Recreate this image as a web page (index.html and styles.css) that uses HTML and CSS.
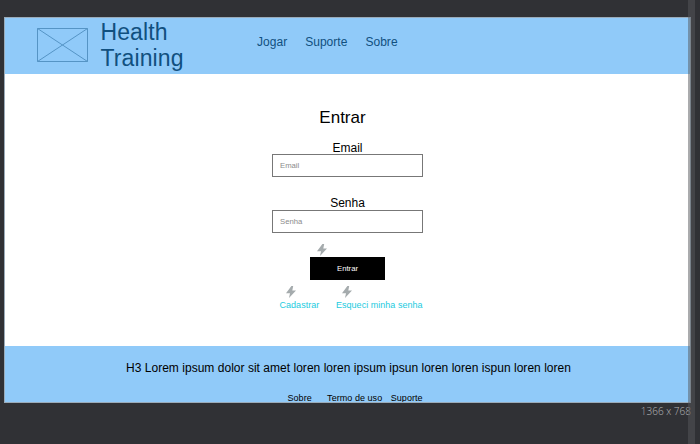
FILE: index.html
```
<!DOCTYPE html>
<html lang="pt">
<head>
<meta charset="utf-8">
<title>Health Training</title>
<link rel="stylesheet" href="styles.css">
</head>
<body>
<div class="artboard">
  <header class="header">
    <svg class="logo" viewBox="0 0 51 34" width="51" height="34"><path d="M.5 .5h50v33h-50zM.5 .5l50 33M50.500 .5l-50 33"/></svg>
    <h1 class="brand">Health<br>Training</h1>
    <nav class="nav"><a>Jogar</a><a>Suporte</a><a>Sobre</a></nav>
  </header>
  <main class="main">
    <h2 class="title">Entrar</h2>
    <form class="form">
      <label class="label">Email</label>
      <div class="field">Email</div>
      <label class="label second">Senha</label>
      <div class="field">Senha</div>
      <div class="action">
        <svg class="bolt" viewBox="0 0 10 12" width="10" height="12"><path d="M5.400 0L0 7.200H4L3 12L10 4.400H6.300L7.200 0z"/></svg>
        <div class="button">Entrar</div>
      </div>
      <div class="links">
        <div class="link"><svg class="bolt" viewBox="0 0 10 12" width="10" height="12"><path d="M5.400 0L0 7.200H4L3 12L10 4.400H6.300L7.200 0z"/></svg><a>Cadastrar</a></div>
        <div class="link"><svg class="bolt" viewBox="0 0 10 12" width="10" height="12"><path d="M5.400 0L0 7.200H4L3 12L10 4.400H6.300L7.200 0z"/></svg><a>Esqueci minha senha</a></div>
      </div>
    </form>
  </main>
  <footer class="footer">
    <h3 class="tagline">H3 Lorem ipsum dolor sit amet loren loren ipsum ipsun loren loren ispun loren loren</h3>
    <nav class="footer-nav"><a>Sobre</a><a>Termo de uso</a><a>Suporte</a></nav>
  </footer>
</div>
<div class="size">1366 x 768</div>
<div class="scrollbar"></div>
</body>
</html>
```
FILE: styles.css
```
* { box-sizing: border-box; }
body {
  margin: 0;
  width: 700px;
  height: 444px;
  padding: 17px 0 0 4px;
  overflow: hidden;
  background: #303135;
  font-family: "Liberation Sans", Arial, sans-serif;
  color: #000;
}
h1, h2, h3 { margin: 0; font-weight: 400; }
svg { display: block; flex: none; }
.artboard {
  width: 687px;
  height: 386px;
  display: flex;
  flex-direction: column;
  background: #fff;
  border: 1px solid #9aabb9;
  overflow: hidden;
}
.header {
  height: 56px;
  flex: none;
  display: flex;
  align-items: flex-start;
  padding-left: 32px;
  background: #90caf9;
  color: #11507f;
}
.logo { margin-top: 10px; fill: none; stroke: #5594c5; stroke-width: 1; }
.brand { width: 156px; margin: 1px 0 0 12.500px; font-size: 23px; line-height: 26px; letter-spacing: .1px; }
.nav { display: flex; gap: 18px; margin: 17px 0 0 .5px; font-size: 12px; line-height: 14px; letter-spacing: .03px; }
.main { height: 272px; flex: none; display: flex; flex-direction: column; padding: 34px 0 0 267px; }
.title { width: 151px; padding-right: 10px; text-align: center; font-size: 17px; line-height: 20px; }
.form { width: 151px; margin-top: 13px; display: flex; flex-direction: column; }
.label { height: 13px; font-size: 12px; line-height: 14px; text-align: center; }
.second { height: 14px; margin-top: 19px; }
.field {
  height: 23px;
  border: 1px solid #777;
  padding-left: 7px;
  font-size: 7.7px;
  line-height: 21px;
  color: #8b8b8b;
}
.bolt { fill: #a5abad; }
.action { margin: 11px 0 0 38px; }
.action .bolt { margin-left: 6.500px; }
.button {
  width: 75px;
  height: 23px;
  margin-top: 1px;
  background: #000;
  color: #fff;
  font-size: 7.7px;
  line-height: 23px;
  text-align: center;
}
.links { display: flex; gap: 16.700px; margin: 6px 0 0 7.500px; white-space: nowrap; }
.link { font-size: 9px; line-height: 12px; letter-spacing: .03px; color: #1ccbe0; }
.link .bolt { margin: 0 0 1px 6.500px; }
.link a { display: block; }
.footer { height: 57px; flex: none; background: #90caf9; }
.tagline { padding: 15px 0 0 121px; font-size: 12px; line-height: 14px; letter-spacing: .025px; white-space: nowrap; }
.footer-nav { display: flex; padding: 18px 0 0 282.500px; font-size: 9px; line-height: 10px; letter-spacing: .05px; white-space: nowrap; }
.footer-nav a:nth-child(2) { margin: 0 8.500px 0 15.300px; }
.size {
  width: 687px;
  margin-top: 1px;
  text-align: right;
  font: 300 10px/14px "Open Sans", sans-serif;
  color: #b5b6b8;
}
.scrollbar {
  position: absolute;
  top: 0;
  left: 688px;
  width: 7px;
  height: 444px;
  background: rgba(85, 87, 91, .5);
}
```
